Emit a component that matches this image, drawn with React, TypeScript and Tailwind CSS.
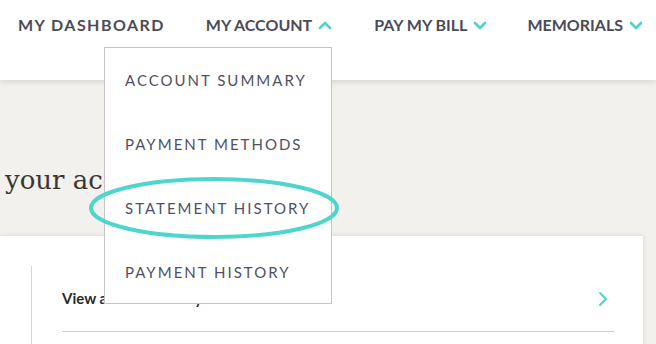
import React from 'react'

function Chevron({ up = false, className = '' }: { up?: boolean; className?: string }) {
  return (
    <svg viewBox="0 0 14 9" className={className} fill="none">
      <path
        d={up ? 'M2 7 L7 2 L12 7' : 'M2 2 L7 7 L12 2'}
        stroke="#4fd3c9"
        strokeWidth="2.6"
        strokeLinecap="round"
        strokeLinejoin="round"
      />
    </svg>
  )
}

const menu = ['ACCOUNT SUMMARY', 'PAYMENT METHODS', 'STATEMENT HISTORY', 'PAYMENT HISTORY']

export default function App() {
  return (
    <div className="relative w-[656px] h-[344px] overflow-hidden bg-[#f2f1ee] font-['Lato','Liberation_Sans',sans-serif]">
      {/* Header */}
      <header className="relative z-10 h-[80px] bg-white shadow-[0_2px_6px_rgba(0,0,0,0.12)]">
        <nav className="flex items-center h-[50px] pl-[18px] text-[16px] font-bold text-[#4b4b57] whitespace-nowrap">
          <span className="shrink-0 tracking-[1.45px]">MY DASHBOARD</span>
          <span className="shrink-0 ml-[41px] flex items-center gap-[6px]">
            MY ACCOUNT <Chevron up className="w-[14px] h-[9px]" />
          </span>
          <span className="shrink-0 ml-[42px] flex items-center gap-[6px]">
            PAY MY BILL <Chevron className="w-[14px] h-[9px]" />
          </span>
          <span className="shrink-0 ml-[40px] flex items-center gap-[6px]">
            MEMORIALS <Chevron className="w-[14px] h-[9px]" />
          </span>
        </nav>
      </header>

      {/* Page intro */}
      <div className="h-[156px] pt-[84px] pl-[5px]">
        <h1 className="font-['DejaVu_Serif',serif] text-[26px] leading-[32px] text-[#3a3633]">your account</h1>
      </div>

      {/* Card */}
      <div className="mr-[13px] h-[120px] bg-white shadow-[0_0_5px_rgba(0,0,0,0.12)] pt-[30px] pl-[31px]">
        <div className="h-full border-l border-[#d4d4d4] pl-[30px] pr-[29px]">
          <div className="flex items-center justify-between h-[66px] border-b border-[#d0d0d0]">
            <span className="text-[15px] font-bold text-[#2a2a2a]">View account history</span>
            <svg viewBox="0 0 10 16" className="w-[10px] h-[16px] mr-[6px]" fill="none">
              <path d="M2 2 L8 8 L2 14" stroke="#4fd3c9" strokeWidth="2" strokeLinecap="round" strokeLinejoin="round" />
            </svg>
          </div>
        </div>
      </div>

      {/* Dropdown menu */}
      <div className="absolute z-20 left-[104px] top-[47px] w-[228px] h-[257px] bg-white border border-[#c4c4c4]">
        {menu.map((m) => (
          <div
            key={m}
            className="h-[64px] flex items-center pl-[20px] text-[15px] tracking-[2px] text-[#505164] whitespace-nowrap"
          >
            {m}
          </div>
        ))}
      </div>

      {/* Highlight ring */}
      <svg className="absolute z-30 left-[87px] top-[175px] w-[256px] h-[66px]" viewBox="0 0 256 66" fill="none">
        <ellipse cx="127" cy="33" rx="123" ry="29" stroke="#4fd6cc" strokeWidth="4" />
      </svg>
    </div>
  )
}
